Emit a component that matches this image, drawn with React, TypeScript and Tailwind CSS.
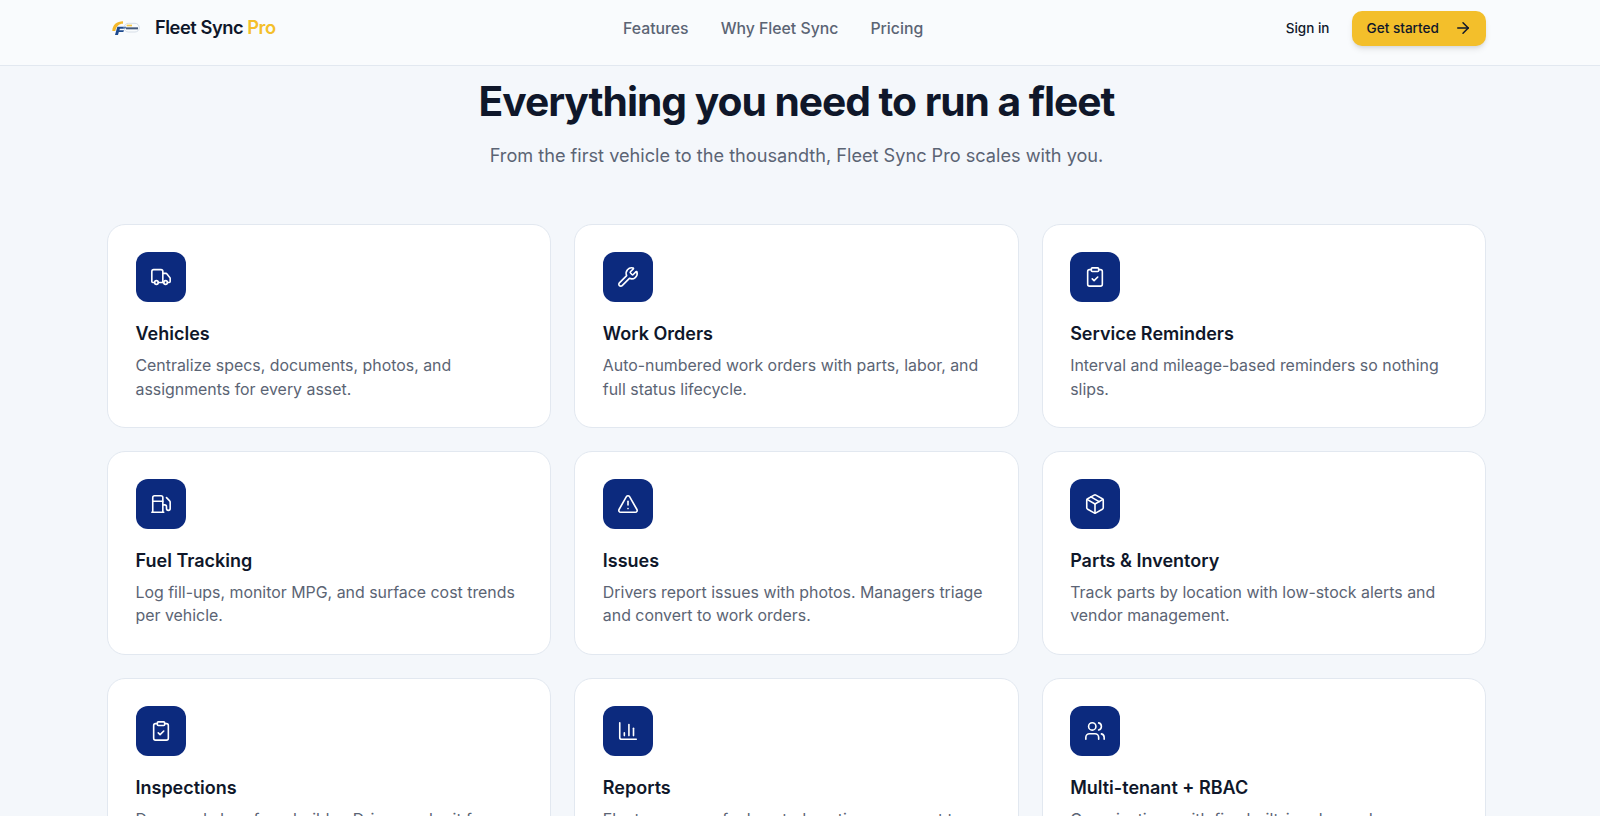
import { ArrowRight, Truck, Wrench, ClipboardCheck, Fuel, TriangleAlert, Package, ChartColumn, Users } from 'lucide-react';

const features = [
  { icon: Truck, title: 'Vehicles', text: 'Centralize specs, documents, photos, and assignments for every asset.' },
  { icon: Wrench, title: 'Work Orders', text: 'Auto-numbered work orders with parts, labor, and full status lifecycle.' },
  { icon: ClipboardCheck, title: 'Service Reminders', text: 'Interval and mileage-based reminders so nothing slips.' },
  { icon: Fuel, title: 'Fuel Tracking', text: 'Log fill-ups, monitor MPG, and surface cost trends per vehicle.' },
  { icon: TriangleAlert, title: 'Issues', text: 'Drivers report issues with photos. Managers triage and convert to work orders.' },
  { icon: Package, title: 'Parts & Inventory', text: 'Track parts by location with low-stock alerts and vendor management.' },
  { icon: ClipboardCheck, title: 'Inspections', text: 'Drag-and-drop form builder. Drivers submit from mobile.' },
  { icon: ChartColumn, title: 'Reports', text: 'Fleet summary, fuel cost, downtime — export to CSV or PDF.' },
  { icon: Users, title: 'Multi-tenant + RBAC', text: 'Organizations with five built-in roles and per-user access.' },
];

function Logo() {
  return (
    <svg width="28" height="14" viewBox="0 0 84 42" fill="none">
      <path d="M1 30 C1 12 14 1 33 1 L33 8 C21 8 12 16 10 30 Z" fill="#f4b82c" />
      <path d="M9 42 L16 17 L42 17 L40 23 L24 23 L22 28 L36 28 L34 33 L20.5 33 L18 42 Z" fill="#1d4a8f" />
      <rect x="36" y="7" width="46" height="26" rx="13" stroke="#c6d0de" strokeWidth="2" />
      <rect x="44" y="11" width="16" height="5" fill="#f4c64a" />
      <rect x="42" y="19" width="36" height="6" fill="#44597c" />
    </svg>
  );
}

export default function App() {
  return (
    <div className="h-screen overflow-hidden bg-[#f4f7fb] text-[#0f172a]" style={{ fontFamily: 'Inter, sans-serif' }}>
      <header className="box-border h-[66px] border-b border-[#e2e8f0] bg-[#f9fbfd] pb-[9px] pl-[112px] pr-[114px] flex items-center">
        <div className="flex items-center gap-[15px] w-[511px]">
          <Logo />
          <span className="text-[18.3px] font-semibold tracking-tight">
            Fleet Sync <span className="text-[#f4bf2a]">Pro</span>
          </span>
        </div>
        <nav className="mt-[1px] flex items-center gap-8 text-[15.8px] font-medium text-[#5b6474]">
          <span>Features</span>
          <span>Why Fleet Sync</span>
          <span>Pricing</span>
        </nav>
        <div className="flex flex-1 items-center justify-end gap-[23px]">
          <span className="text-[13.5px] font-medium">Sign in</span>
          <span className="flex h-[35px] items-center gap-[15px] rounded-[10px] bg-[#f3bf2b] px-[14px] text-[13.6px] font-medium shadow-md">
            Get started
            <ArrowRight size={18} />
          </span>
        </div>
      </header>
      <main className="pl-[107px] pr-[114px]">
        <div className="text-center">
          <h2 className="text-[40.75px] font-bold leading-[56px] tracking-tight mt-[8px]">Everything you need to run a fleet</h2>
          <p className="mt-[11px] text-[18.15px] leading-[28px] text-[#5b6474]">
            From the first vehicle to the thousandth, Fleet Sync Pro scales with you.
          </p>
        </div>
        <div className="mt-[55px] grid grid-cols-3 gap-x-[23px] gap-y-[23px]">
          {features.map((f) => (
            <div key={f.title} className="h-[203.75px] rounded-[18px] border border-[#e2e8f0] bg-white px-[27.5px] py-[27px]">
              <div className="flex h-[50px] w-[50px] items-center justify-center rounded-[12px] bg-[#0c2a7e] text-white">
                <f.icon size={22} strokeWidth={1.75} />
              </div>
              <h3 className="mt-[18px] text-[18px] font-semibold leading-[28px]">{f.title}</h3>
              <p className="mt-[6px] text-[15.9px] leading-[23.5px] text-[#5b6474]">{f.text}</p>
            </div>
          ))}
        </div>
      </main>
    </div>
  );
}
